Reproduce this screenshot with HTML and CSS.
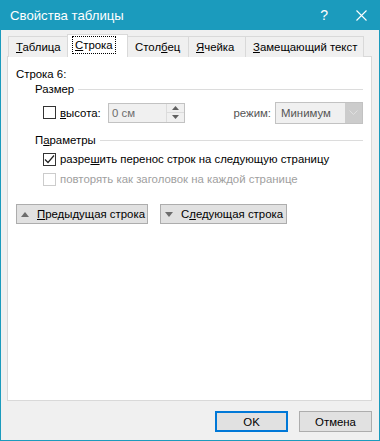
FILE: index.html
```html
<!DOCTYPE html>
<html lang="ru">
<head>
<meta charset="utf-8">
<link rel="stylesheet" href="styles.css">
</head>
<body>
<div class="window">
  <div class="titlebar">
    <span class="title">Свойства таблицы</span>
    <span class="help">?</span>
    <span class="close"><svg width="11" height="11" viewBox="0 0 11 11"><path d="M0.5 0.5L10.5 10.5M10.5 0.5L0.5 10.5" stroke="#fff" stroke-width="1.1"/></svg></span>
  </div>
  <div class="client">
    <div class="tabs">
      <div class="tab t1"><u>Т</u>аблица</div>
      <div class="tab active t2"><span class="focus"><u>С</u>трока</span></div>
      <div class="tab t3">Стол<u>б</u>ец</div>
      <div class="tab t4"><u>Я</u>чейка</div>
      <div class="tab t5"><u>З</u>амещающий текст</div>
    </div>
    <div class="panel">
      <div class="row-label">Строка 6:</div>
      <div class="group-head first"><span>Размер</span></div>
      <div class="size-row">
        <span class="cb"></span>
        <span class="lbl"><u>в</u>ысота:</span>
        <div class="spin">
          <span class="val">0 см</span>
          <div class="spinbtns">
            <span class="sb"><svg width="7" height="4" viewBox="0 0 7 4"><path d="M3.5 0L7 4H0Z" fill="#606060"/></svg></span>
            <span class="sb"><svg width="7" height="4" viewBox="0 0 7 4"><path d="M0 0H7L3.5 4Z" fill="#606060"/></svg></span>
          </div>
        </div>
        <span class="mode">режим:</span>
        <div class="select">
          <span class="sel-val">Минимум</span>
          <span class="drop"><svg width="9" height="5" viewBox="0 0 9 5"><path d="M0.5 0.5L4.5 4.5L8.5 0.5" fill="none" stroke="#e0e0e0" stroke-width="1"/></svg></span>
        </div>
      </div>
      <div class="group-head second"><span>П<u>а</u>раметры</span></div>
      <div class="check-row"><span class="cb"><svg width="11" height="11" viewBox="0 0 11 11"><path d="M1 5.5L4 8.5L10 1.5" fill="none" stroke="#222" stroke-width="1.2"/></svg></span><span>разре<u>ш</u>ить перенос строк на следующую страницу</span></div>
      <div class="check-row disabled"><span class="cb"></span><span>повторять как заголовок на каждой странице</span></div>
      <div class="nav">
        <button class="btn navbtn prev"><svg width="8" height="5" viewBox="0 0 8 5"><path d="M4 0L8 5H0Z" fill="#6d6d6d"/></svg><span><u>П</u>редыдущая строка</span></button>
        <button class="btn navbtn next"><svg width="8" height="5" viewBox="0 0 8 5"><path d="M0 0H8L4 5Z" fill="#6d6d6d"/></svg><span>С<u>л</u>едующая строка</span></button>
      </div>
    </div>
    <div class="footer">
      <button class="btn dlg ok">OK</button>
      <button class="btn dlg">Отмена</button>
    </div>
  </div>
</div>
</body>
</html>
```

FILE: styles.css
```css
html, body {
  margin: 0;
  padding: 0;
}
body {
  font-family: "Liberation Sans", Arial, sans-serif;
  font-size: 11.4px;
  color: #000;
}
u {
  text-decoration-thickness: 1px;
  text-underline-offset: 1px;
}
.window {
  width: 380px;
  height: 441px;
  box-sizing: border-box;
  border: 1px solid #1b9bbd;
  border-top: 0;
  background: #f0f0f0;
  display: flex;
  flex-direction: column;
}
.titlebar {
  height: 30px;
  flex: none;
  background: #1b9bbd;
  margin: 0 -1px;
  padding-left: 10px;
  display: flex;
  align-items: center;
  color: #fff;
}
.title {
  flex: 1;
  font-size: 13.2px;
}
.help {
  font-size: 14px;
  margin-right: 28px;
}
.close {
  display: flex;
  margin-right: 13px;
}
.client {
  flex: 1;
  display: flex;
  flex-direction: column;
  padding: 5px 7px 8px 6px;
}
.tabs {
  display: flex;
  align-items: flex-end;
  height: 22px;
  margin-left: 1px;
  margin-bottom: -1px;
  position: relative;
  z-index: 1;
}
.tab {
  height: 21px;
  box-sizing: border-box;
  border: 1px solid #d9d9d9;
  border-bottom: 0;
  background: #f0f0f0;
  margin-right: -1px;
  line-height: 16px;
  padding-top: 2px;
  padding-left: 7px;
  white-space: nowrap;
}
.t1 { width: 60px; }
.t2 { width: 61px; }
.t3 { width: 62px; }
.t4 { width: 58px; }
.t5 { width: 119px; }
.tab.active {
  height: 23px;
  background: #fff;
  padding: 1px 0 0 4px;
  position: relative;
}
.focus {
  display: inline-block;
  border: 1px dotted #000;
  padding: 1px 2px 0;
  line-height: 15px;
}
.panel {
  flex: 1;
  background: #fff;
  border: 1px solid #d9d9d9;
  padding: 8px 8px 0 8px;
}
.row-label {
  line-height: 16px;
  margin-top: 1px;
  margin-bottom: -1px;
}
.group-head {
  display: flex;
  align-items: center;
  gap: 4px;
  margin-left: 19px;
  line-height: 16px;
}
.group-head::after {
  content: "";
  flex: 1;
  height: 1px;
  background: #dcdcdc;
}
.group-head.second {
  margin-top: 9px;
  margin-bottom: -1px;
}
.size-row {
  display: flex;
  align-items: center;
  height: 21px;
  margin-top: 5px;
  margin-left: 27px;
}
.cb {
  width: 13px;
  height: 13px;
  box-sizing: border-box;
  border: 1px solid #333;
  background: #fff;
  flex: none;
  display: flex;
  align-items: center;
  justify-content: center;
}
.lbl {
  margin-left: 4px;
  width: 48px;
}
.spin {
  width: 77px;
  height: 20px;
  box-sizing: border-box;
  border: 1px solid #c2c2c2;
  background: #f0f0f0;
  display: flex;
  align-items: center;
}
.val {
  flex: 1;
  padding-left: 3px;
  color: #6d6d6d;
}
.spinbtns {
  width: 17px;
  height: 18px;
  display: flex;
  flex-direction: column;
  border-left: 1px solid #dcdcdc;
}
.sb {
  flex: 1;
  display: flex;
  align-items: center;
  justify-content: center;
}
.sb + .sb {
  border-top: 1px solid #dcdcdc;
}
.mode {
  margin-left: auto;
  margin-right: 4px;
  color: #555;
}
.select {
  width: 88px;
  height: 22px;
  box-sizing: border-box;
  border: 1px solid #c2c2c2;
  background: #f0f0f0;
  display: flex;
  align-items: center;
}
.sel-val {
  flex: 1;
  padding-left: 5px;
  color: #555;
}
.drop {
  width: 17px;
  align-self: stretch;
  background: #cccccc;
  display: flex;
  align-items: center;
  justify-content: center;
}
.check-row {
  display: flex;
  align-items: center;
  gap: 4px;
  margin-left: 27px;
  margin-top: 4px;
  line-height: 16px;
}
.check-row.disabled {
  color: #a0a0a0;
}
.check-row.disabled .cb {
  border-color: #cccccc;
}
.nav {
  display: flex;
  gap: 12px;
  margin-top: 17px;
}
.btn {
  font-family: inherit;
  font-size: 11.4px;
  color: #000;
  background: #e1e1e1;
  border: 1px solid #adadad;
  border-radius: 0;
  padding: 0;
  margin: 0;
  box-sizing: border-box;
  white-space: nowrap;
}
.navbtn {
  height: 20px;
  display: flex;
  align-items: center;
  gap: 8px;
  padding-left: 4px;
}
.prev { width: 132px; }
.next { width: 127px; }
.footer {
  display: flex;
  justify-content: flex-end;
  gap: 11px;
  margin-top: 10px;
}
.dlg {
  width: 73px;
  height: 21px;
  line-height: 16px;
}
.dlg.ok {
  border: 2px solid #0078d7;
}
```
